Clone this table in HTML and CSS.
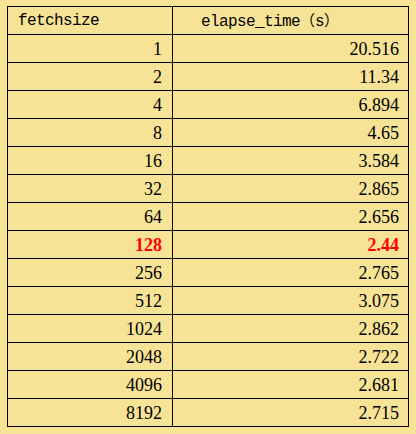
FILE: index.html
```html
<!DOCTYPE html>
<html>
<head>
<meta charset="utf-8">
<link rel="stylesheet" href="styles.css">
</head>
<body>
<table class="data">
  <colgroup><col class="col1"><col class="col2"></colgroup>
  <tr class="head"><td class="c1">fetchsize</td><td class="c2">elapse_time<span class="cjk">（</span>s<span class="cjk">）</span></td></tr>
  <tr><td>1</td><td>20.516</td></tr>
  <tr><td>2</td><td>11.34</td></tr>
  <tr><td>4</td><td>6.894</td></tr>
  <tr><td>8</td><td>4.65</td></tr>
  <tr><td>16</td><td>3.584</td></tr>
  <tr><td>32</td><td>2.865</td></tr>
  <tr><td>64</td><td>2.656</td></tr>
  <tr class="best"><td>128</td><td>2.44</td></tr>
  <tr><td>256</td><td>2.765</td></tr>
  <tr><td>512</td><td>3.075</td></tr>
  <tr><td>1024</td><td>2.862</td></tr>
  <tr><td>2048</td><td>2.722</td></tr>
  <tr><td>4096</td><td>2.681</td></tr>
  <tr><td>8192</td><td>2.715</td></tr>
</table>
</body>
</html>
```
FILE: styles.css
```css
html, body {
  margin: 0;
  padding: 0;
  background: #f6e396;
}
body {
  padding: 6px 0 0 7px;
}
.data {
  border-collapse: collapse;
  table-layout: fixed;
  width: 402px;
  font-family: "Liberation Serif", "Noto Sans CJK SC", serif;
  font-size: 18px;
  color: #000;
}
.col1 {
  width: 165px;
}
.data td {
  border: 1px solid #000;
  height: 28px;
  box-sizing: border-box;
  padding: 1px 9px 0 0;
  text-align: right;
  vertical-align: middle;
  line-height: 18px;
  white-space: nowrap;
}
.data td:first-child {
  padding-right: 10px;
}
.data tr.head td {
  text-align: left;
  font-family: "Liberation Mono", monospace;
  font-size: 16px;
  letter-spacing: -0.6px;
}
.data tr.head td.c1 {
  padding-left: 10px;
}
.data tr.head td.c2 {
  padding-left: 28px;
}
.cjk {
  font-family: "Noto Sans CJK SC", sans-serif;
  font-size: 15px;
  letter-spacing: 0;
}
.data tr.best td {
  color: #ff0000;
  font-weight: bold;
}
```
